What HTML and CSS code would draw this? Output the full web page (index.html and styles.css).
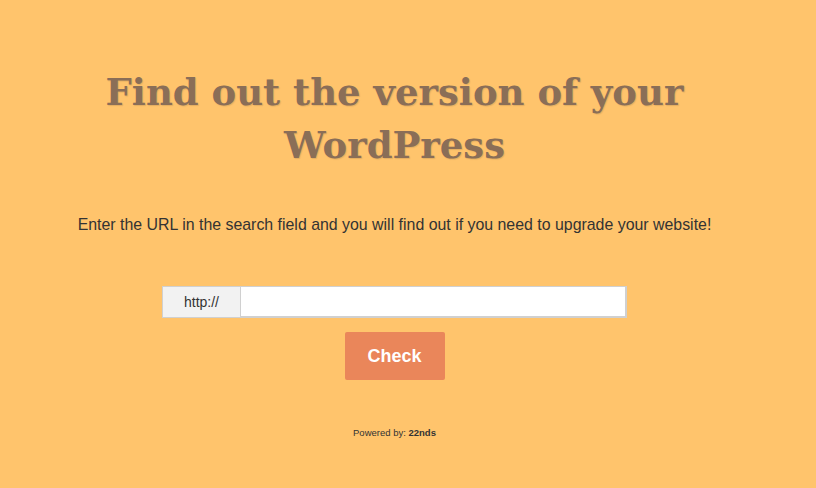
FILE: index.html
```html
<!DOCTYPE html>
<html>
<head>
<meta charset="utf-8">
<link rel="stylesheet" href="styles.css">
</head>
<body>
<div class="page">
  <h1 class="title">Find out the version of your WordPress</h1>
  <p class="lead">Enter the URL in the search field and you will find out if you need to upgrade your website!</p>
  <form class="search">
    <div class="group">
      <span class="addon">http://</span>
      <input class="field" type="text">
    </div>
    <button class="check" type="button">Check</button>
  </form>
  <p class="powered">Powered by: <b>22nds</b></p>
</div>
</body>
</html>
```
FILE: styles.css
```css
html, body {
  margin: 0;
  padding: 0;
  background: #ffc46c;
}
.page {
  width: 789px;
  display: flex;
  flex-direction: column;
  align-items: center;
  font-family: "Liberation Sans", Arial, sans-serif;
}
.title {
  margin: 66px 0 0;
  width: 620px;
  text-align: center;
  font-family: "DejaVu Serif", serif;
  font-weight: bold;
  font-size: 37px;
  line-height: 53px;
  color: #8a6e57;
  text-shadow: 1px 1px 1px rgba(120, 90, 60, 0.2);
}
.lead {
  margin: 42px 0 0;
  font-size: 15.9px;
  line-height: 22px;
  color: #333;
}
.search {
  margin: 50px 0 0;
  display: flex;
  flex-direction: column;
  align-items: center;
  gap: 14px;
}
.group {
  display: flex;
  width: 465px;
  height: 32px;
  box-sizing: border-box;
}
.addon {
  width: 78px;
  box-sizing: border-box;
  display: flex;
  align-items: center;
  justify-content: center;
  background: #f2f2f2;
  border: 1px solid #d0d0d0;
  border-right: none;
  font-size: 14px;
  color: #333;
}
.field {
  flex: 1;
  margin: 0;
  box-sizing: border-box;
  height: 32px;
  border: 1px solid #d0d0d0;
  border-width: 1px 2px 2px 1px;
  background: #fff;
  padding: 0 8px;
  outline: none;
}
.check {
  width: 100px;
  height: 48px;
  border: none;
  border-radius: 2px;
  background: #ea865a;
  color: #fff;
  font-family: "Liberation Sans", Arial, sans-serif;
  font-weight: bold;
  font-size: 18px;
  padding: 0;
}
.powered {
  margin: 47px 0 0;
  font-size: 9.5px;
  line-height: 12px;
  color: #333;
}
.powered b {
  font-weight: bold;
}
```
